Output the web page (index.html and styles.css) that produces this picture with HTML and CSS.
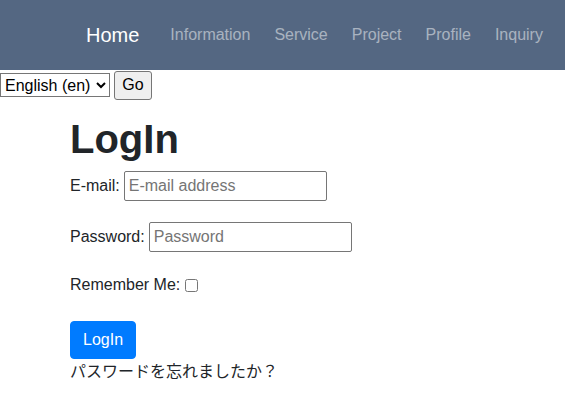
FILE: index.html
```html
<!DOCTYPE html>
<html lang="en">
<head>
<meta charset="utf-8">
<title>LogIn</title>
<link rel="stylesheet" href="styles.css">
</head>
<body>
<nav class="navbar">
  <a class="brand" href="#">Home</a>
  <a class="nav-link" href="#">Information</a>
  <a class="nav-link" href="#">Service</a>
  <a class="nav-link" href="#">Project</a>
  <a class="nav-link" href="#">Profile</a>
  <a class="nav-link" href="#">Inquiry</a>
</nav>
<form class="lang-form">
  <select class="lang-select"><option>English (en)</option></select>
  <button type="button" class="go-btn">Go</button>
</form>
<main class="container">
  <h1 class="title">LogIn</h1>
  <div class="row row-email">
    <label>E-mail:</label>
    <input class="field" type="text" placeholder="E-mail address">
  </div>
  <div class="row row-pass">
    <label>Password:</label>
    <input class="field" type="password" placeholder="Password">
  </div>
  <div class="row row-remember">
    <label>Remember Me:</label>
    <input class="check" type="checkbox">
  </div>
  <button type="button" class="btn-login">LogIn</button>
  <div class="forgot">パスワードを忘れましたか？</div>
</main>
</body>
</html>
```
FILE: styles.css
```css
body {
  margin: 0;
  font-family: "Liberation Sans", Arial, sans-serif;
  font-size: 16px;
  color: #212529;
  background: #fff;
}
.navbar {
  height: 70px;
  background: #546782;
  display: flex;
  align-items: center;
  padding-left: 86px;
  box-sizing: border-box;
}
.brand {
  color: #fff;
  font-size: 20px;
  text-decoration: none;
  margin-right: 23px;
}
.nav-link {
  color: rgba(255, 255, 255, 0.5);
  text-decoration: none;
  padding: 0 8px;
  margin-right: 8px;
}
.lang-form {
  display: flex;
  align-items: center;
  height: 30px;
}
.lang-select {
  font-family: "Liberation Sans", Arial, sans-serif;
  font-size: 16px;
  height: 24px;
  width: 110px;
  margin: 0;
  padding: 0;
  border: 1px solid #767676;
  border-radius: 0;
  background: #fff;
  color: #000;
}
.go-btn {
  font-family: "Liberation Sans", Arial, sans-serif;
  font-size: 16px;
  height: 29px;
  width: 38px;
  margin: 0 0 0 4px;
  padding: 0;
  border: 1px solid #767676;
  border-radius: 3px;
  background: #efefef;
  color: #000;
}
.container {
  padding-left: 70px;
}
.title {
  font-size: 40px;
  font-weight: 700;
  line-height: 48px;
  margin: 15px 0 8px;
}
.row {
  display: flex;
  align-items: center;
}
.row label {
  margin-right: 4px;
}
.field {
  font-family: "Liberation Sans", Arial, sans-serif;
  font-size: 16px;
  width: 203px;
  height: 30px;
  box-sizing: border-box;
  border: 1px solid #767676;
  border-radius: 2px;
  padding: 0 4px;
  margin: 0;
  color: #212529;
}
.field::placeholder {
  color: #757575;
}
.row-email {
  margin-top: 2px;
}
.row-pass {
  margin-top: 21px;
}
.row-remember {
  margin-top: 23px;
  height: 20px;
}
.check {
  width: 13px;
  height: 13px;
  margin: 0 0 0 1px;
}
.btn-login {
  margin-top: 26px;
  display: block;
  font-family: "Liberation Sans", Arial, sans-serif;
  font-size: 16px;
  line-height: 24px;
  padding: 6px 12px;
  height: 38px;
  width: 66px;
  border: 1px solid #007bff;
  border-radius: 4px;
  background: #007bff;
  color: #fff;
}
.forgot {
  font-family: "Noto Sans CJK JP", sans-serif;
  font-size: 16px;
  line-height: 22px;
}
```
